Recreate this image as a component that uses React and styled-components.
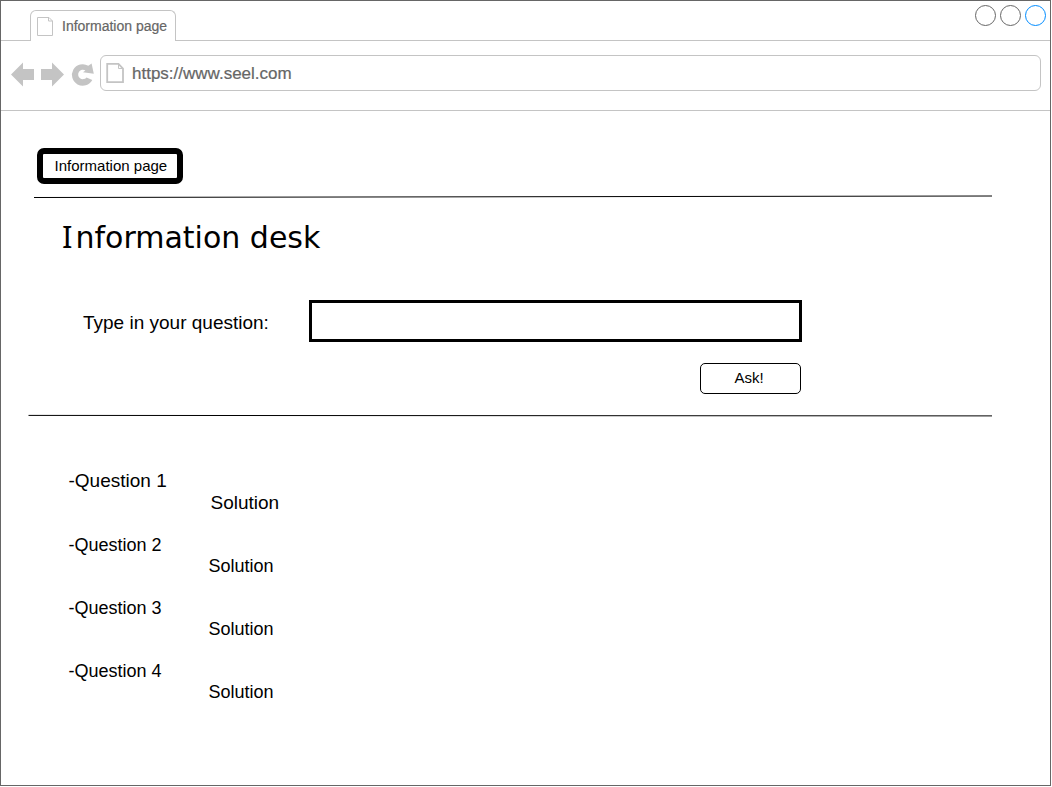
import React from "react";
import styled, { createGlobalStyle } from "styled-components";

const GlobalStyle = createGlobalStyle`
  * { box-sizing: border-box; }
  body {
    margin: 0;
    background: #fff;
    color: #000;
    font-family: Helvetica, "Liberation Sans", Arial, sans-serif;
  }
`;

const Window = styled.div`
  width: 1051px;
  height: 786px;
  border: 1px solid #666;
  background: #fff;
`;

const TabBar = styled.header`
  display: flex;
  height: 40px;
  padding-left: 29px;
  border-bottom: 1px solid #c4c4c4;
`;

const Tab = styled.div`
  display: flex;
  align-items: center;
  width: 146px;
  height: 31px;
  margin-top: 9px;
  padding: 0 0 1px 6px;
  gap: 8px;
  border: 1px solid #c4c4c4;
  border-bottom: 0;
  border-radius: 6px 6px 0 0;
  background: #fff;
  color: #666;
  font-size: 14px;
  line-height: 20px;
  white-space: nowrap;
  -webkit-text-stroke: 0.2px #666;
`;

const WindowControls = styled.div`
  display: flex;
  gap: 4px;
  margin: 4px 4px 0 auto;
`;

const Control = styled.span`
  width: 21px;
  height: 21px;
  border: 1px solid ${(p) => (p.$active ? "#008cff" : "#666")};
  border-radius: 50%;
`;

const AddressBar = styled.div`
  display: flex;
  height: 70px;
  padding: 14px 9px 0 9px;
  border-bottom: 1px solid #c4c4c4;
`;

const NavIcons = styled.svg`
  flex: none;
  width: 90px;
  height: 36px;
  fill: #c4c4c4;
`;

const UrlField = styled.div`
  display: flex;
  flex: 1;
  align-items: center;
  height: 36px;
  padding-left: 5px;
  gap: 7px;
  border: 1px solid #c4c4c4;
  border-radius: 6px;
  color: #666;
  font-size: 17px;
  line-height: 20px;
  -webkit-text-stroke: 0.2px #666;
`;

const Url = styled.span`
  margin-top: 2px;
`;

const Icon = styled.svg`
  flex: none;
  fill: none;
  stroke: #c4c4c4;
`;

const PageButton = styled.button`
  display: block;
  width: 146px;
  height: 36px;
  margin: 36.5px 0 0 36.4px;
  padding: 1px 0 0 1px;
  border: 6px solid #000;
  border-radius: 7px;
  background: #fff;
  color: #000;
  font: 15px/20px Helvetica, "Liberation Sans", Arial, sans-serif;
  white-space: nowrap;
`;

const Divider = styled.svg`
  display: block;
  width: 1000px;
  height: 4px;
  margin-top: ${(p) => p.$gap}px;
  stroke: #000;
  stroke-width: 1;
`;

const Heading = styled.h1`
  margin: 19px 0 0 61px;
  font: 400 30px/40px Verdana, "DejaVu Sans", sans-serif;

  &::first-letter {
    font-family: "Noto Sans", sans-serif;
    font-size: 31px;
    line-height: 1;
    letter-spacing: 3px;
  }
`;

const QuestionForm = styled.form`
  display: flex;
  flex-direction: column;
  width: 801px;
  padding: 42px 0 0 82px;
`;

const Field = styled.div`
  display: flex;
  align-items: center;
  justify-content: space-between;
`;

const Label = styled.label`
  margin-top: 4px;
  font-size: 19px;
  line-height: 22px;
`;

const Input = styled.input`
  width: 493px;
  height: 42px;
  padding: 0 8px;
  border: 3px solid #000;
  border-radius: 0;
  background: #fff;
  font-size: 18px;
`;

const AskButton = styled.button`
  align-self: flex-end;
  width: 101px;
  height: 31px;
  margin: 21px 1px 0 0;
  padding: 0 3px 1px 0;
  border: 1px solid #000;
  border-radius: 5px;
  background: #fff;
  color: #000;
  font: 15px/20px Helvetica, "Liberation Sans", Arial, sans-serif;
`;

const List = styled.dl`
  display: flex;
  flex-direction: column;
  gap: 21px;
  margin: 52px 0 0 67.5px;
`;

const Item = styled.div`
  font-size: ${(p) => (p.$large ? 19 : 18)}px;
  line-height: ${(p) => (p.$large ? 22 : 21)}px;
`;

const Question = styled.dt``;

const Solution = styled.dd`
  margin: 0 0 0 ${(p) => (p.$large ? 142 : 140)}px;
`;

const items = [1, 2, 3, 4];

export default function App() {
  return (
    <>
      <GlobalStyle />
      <Window>
        <TabBar>
          <Tab>
            <Icon width="17" height="20" viewBox="0 0 17 20">
              <path d="M.5 1.5H12L15.5 5V19.5H.5ZM11.5 1.5V5H15.5" />
            </Icon>
            Information page
          </Tab>
          <WindowControls>
            <Control />
            <Control />
            <Control $active />
          </WindowControls>
        </TabBar>
        <AddressBar>
          <NavIcons viewBox="0 0 90 36">
            <path d="M1 19.5 13 7.5V14H24V25H13V31.5Z" />
            <path d="M54 19.5 42 7.5V14H31V25H42V31.5Z" />
            <path d="M78.300 10.700A10.800 10.800 0 1 0 82.300 25L76.500 22.400A4.700 4.700 0 1 1 75.400 15.500L73 17.200 83.800 18.800 81.600 8.600Z" />
          </NavIcons>
          <UrlField>
            <Icon width="19" height="22" viewBox="0 0 19 22" strokeWidth="1.8">
              <path d="M1.200 1.900H12.500L17 6.500V20.100H1.200Z" />
              <path d="M12.500 2V6.500H17" strokeWidth="1" />
            </Icon>
            <Url>https://www.seel.com</Url>
          </UrlField>
        </AddressBar>
        <main>
          <PageButton>Information page</PageButton>
          <Divider $gap={11.5}>
            <line x1="33" y1="2.500" x2="991" y2="1" />
          </Divider>
          <Heading>Information desk</Heading>
          <QuestionForm onSubmit={(e) => e.preventDefault()}>
            <Field>
              <Label htmlFor="question">Type in your question:</Label>
              <Input id="question" />
            </Field>
            <AskButton>Ask!</AskButton>
          </QuestionForm>
          <Divider $gap={20}>
            <line x1="27.5" y1="1.400" x2="991" y2="1.900" />
          </Divider>
          <List>
            {items.map((n) => (
              <Item key={n} $large={n === 1}>
                <Question>-Question {n}</Question>
                <Solution $large={n === 1}>Solution</Solution>
              </Item>
            ))}
          </List>
        </main>
      </Window>
    </>
  );
}
